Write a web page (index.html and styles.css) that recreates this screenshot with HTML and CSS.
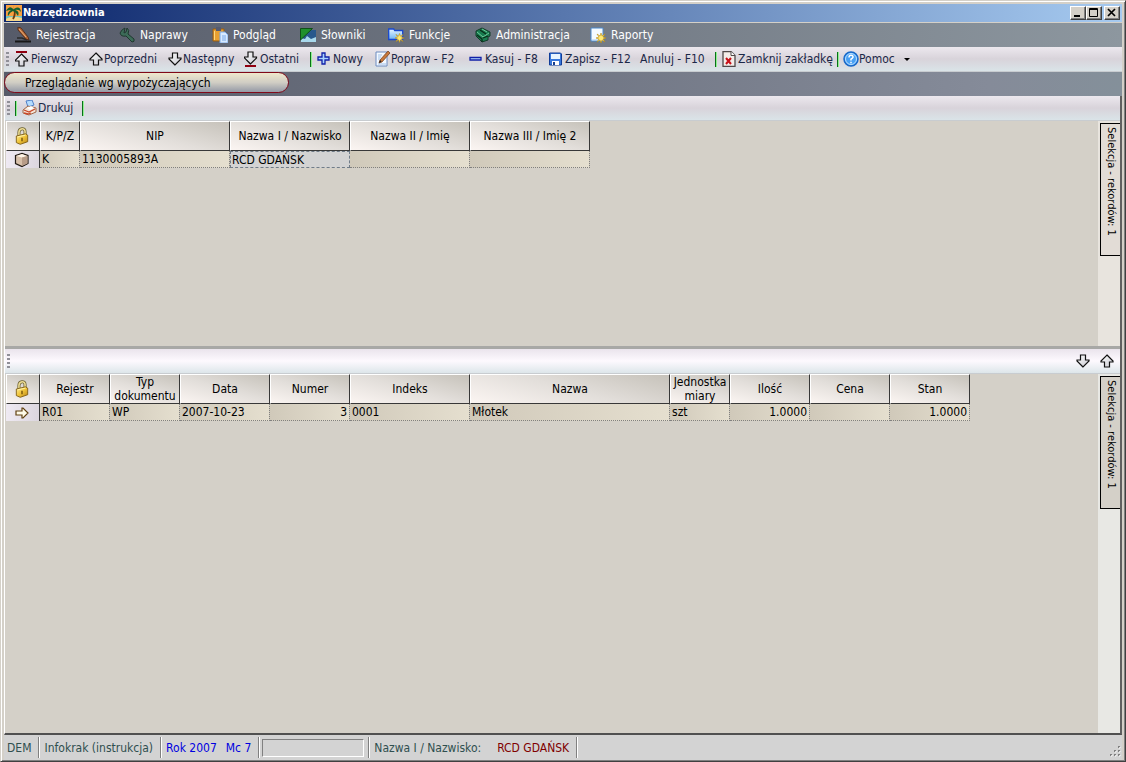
FILE: index.html
```html
<!DOCTYPE html>
<html lang="pl">
<head>
<meta charset="utf-8">
<title>Narzędziownia</title>
<link rel="stylesheet" href="styles.css">
</head>
<body>
<svg class="defs" aria-hidden="true">
  <defs>
    <linearGradient id="gold" x2="1" y2="1"><stop stop-color="#fff0a0"/><stop offset=".5" stop-color="#f0c438"/><stop offset="1" stop-color="#b88418"/></linearGradient>
    <linearGradient id="folder" x2="0" y2="1"><stop stop-color="#e8f6ff"/><stop offset="1" stop-color="#6db4f4"/></linearGradient>
    <linearGradient id="metal" x2="1" y2="1"><stop stop-color="#fff"/><stop offset="1" stop-color="#c8c8d0"/></linearGradient>
    <symbol id="up" viewBox="0 0 16 16"><path d="M8 2 14 8v1h-3.500v5h-5V9H2V8z" fill="url(#metal)" stroke="#111" stroke-width="1.2"/></symbol>
    <symbol id="down" viewBox="0 0 16 16"><path d="M8 14 2 8V7h3.500V2h5v5H14v1z" fill="url(#metal)" stroke="#111" stroke-width="1.2"/></symbol>
    <symbol id="star" viewBox="0 0 10 10"><path d="M5 0 6 3 9 1 7 4 10 5 7 6 9 9 6 7 5 10 4 7 1 9 3 6 0 5 3 4 1 1 4 3z" fill="#ffe870" stroke="#b88a10" stroke-width=".6"/></symbol>
    <symbol id="lock" viewBox="0 0 16 20"><path d="M4.500 10V6c0-5 7-6 7-1v4" fill="none" stroke="#6d6230" stroke-width="3.500"/><path d="M4.500 10V6c0-5 7-6 7-1v4" fill="none" stroke="#ecdc94" stroke-width="1.800"/><path d="M1.500 10 12 7.500 14.500 9v7.500L6 19.500l-4.500-2z" fill="url(#gold)" stroke="#7c5a10"/><path d="M3 11l9-2" stroke="#fff4b0"/><path d="M8 12v4" stroke="#6b4a08" stroke-width="1.500"/></symbol>
  </defs>
</svg>
<div class="window">
  <header class="titlebar">
    <svg class="icon" viewBox="0 0 16 16"><path d="M0 0h16v16H0z" fill="#f7a040"/><path d="M0 11h16v3H0z" fill="#6fc4c0"/><path d="M0 14q5-4 16-1v3H0z" fill="#f4d58a"/><path d="M8 4q2 5-1 10" fill="none" stroke="#6b3a10" stroke-width="1.800"/><path d="M8 5Q4-1 0 6q3-1 5-1-4 2-3 6 2-4 5-5 3 1 5 5 2-5-3-6 4-1 6 2-1-7-7-3L7 0z" fill="#146030"/></svg>
    <h1>Narzędziownia</h1>
    <div class="caption">
      <button aria-label="Minimalizuj"><svg viewBox="0 0 10 10"><path d="M1 8h6" stroke="#000" stroke-width="2"/></svg></button>
      <button aria-label="Maksymalizuj"><svg viewBox="0 0 10 10"><path d="M.5.5h8v8h-8zM.5 1.500h8" fill="none" stroke="#000"/></svg></button>
      <button class="close" aria-label="Zamknij"><svg viewBox="0 0 10 10"><path d="m1 1 7 7M8 1 1 8" stroke="#000" stroke-width="1.700"/></svg></button>
    </div>
  </header>

  <nav class="menu">
    <button><svg class="icon" viewBox="0 0 16 16"><path d="M0 14.500h16" stroke="#181818" stroke-width="2"/><path d="M2 11h5l5 2" stroke="#2a2a2a" stroke-width="1.500" fill="none"/><path d="M3 0 6 1l7 9 1 3-3-1L3 3z" fill="#b86a38" stroke="#4c2410" stroke-width=".8"/><path d="m4 2 7 8" stroke="#eab078"/></svg><span>Rejestracja</span></button>
    <button><svg class="icon" viewBox="0 0 16 16"><path d="M6 1Q3 2 1 6q1 4 6 3l6 6q3 0 2-3L9 7q2-4-1-6L7 5 5 6z" fill="#3c6b58" stroke="#20382f"/></svg><span>Naprawy</span></button>
    <button><svg class="icon" viewBox="0 0 16 16"><path d="M1 2h11v12H1z" fill="#e8a030" stroke="#995c10"/><path d="M2.500 4v9" stroke="#ffd880"/><path d="M4 0h5v4H4z" fill="#555b70"/><path d="M8 5h5l3 3v8H8z" fill="#d7eaff" stroke="#7aa8e4"/><path d="M10 9h4M10 11h4M10 13h4" stroke="#78a8e8"/></svg><span>Podgląd</span></button>
    <button><svg class="icon" viewBox="0 0 16 16"><path d="M1 3h15v12H1z" fill="#28588c"/><path d="M1 15v-4l4 1 2-3 4 3 5-2v5z" fill="#a8d8ec"/><path d="M.5 1.500h12L.5 13z" fill="#20902c" stroke="#105018"/></svg><span>Słowniki</span></button>
    <button><svg class="icon" viewBox="0 0 16 16"><path d="M.7 2h5l1 1.500h8v9h-14z" fill="url(#folder)" stroke="#1848d0" stroke-width="1.300"/><use href="#star" x="7" y="6" width="9" height="10"/></svg><span>Funkcje</span></button>
    <button><svg class="icon" viewBox="0 0 16 16"><path d="m1 4 6-3 8 4v4l-2 1v3l-6 2-6-6z" fill="#187c50" stroke="#123c28"/><path d="m2 5 6 5 6-4M7 2l5 3" fill="none" stroke="#70c898"/><path d="m2 8 5 4v3M5 3l6 4M8 11l5-2" stroke="#0a2c18" stroke-width="1.300" fill="none"/></svg><span>Administracja</span></button>
    <button><svg class="icon" viewBox="0 0 16 16"><path d="M1 1h12v13H1z" fill="#f4faff" stroke="#4a88cc"/><path d="M2 13h11" stroke="#a8ccf0"/><use href="#star" x="6" y="6" width="10" height="10"/></svg><span>Raporty</span></button>
  </nav>

  <div class="bar tools">
    <i class="grip"></i>
    <button><svg class="icon" viewBox="0 0 16 16"><path d="M1 1h11" stroke="#900010" stroke-width="2"/><path d="M6.500 3 12.500 9v1H9v5H4v-5H.5V9z" fill="url(#metal)" stroke="#111" stroke-width="1.200"/></svg><span>Pierwszy</span></button>
    <button><svg class="icon"><use href="#up"/></svg><span>Poprzedni</span></button>
    <button><svg class="icon"><use href="#down"/></svg><span>Następny</span></button>
    <button><svg class="icon" viewBox="0 0 16 16"><path d="M1 15h11" stroke="#900010" stroke-width="2"/><path d="M6.500 13 .5 7V6H4V1h5v5h3.500v1z" fill="url(#metal)" stroke="#111" stroke-width="1.200"/></svg><span>Ostatni</span></button>
    <i class="sep"></i>
    <button><svg class="icon" viewBox="0 0 16 16"><path d="M5 2h3v4h4v3H8v4H5V9H1V6h4z" fill="#a8d4ff" stroke="#1020a8" stroke-width="1.300"/></svg><span>Nowy</span></button>
    <button><svg class="icon" viewBox="0 0 16 16"><path d="M1 1h11v14H1z" fill="#f4f9ff" stroke="#6c8cc0"/><path d="M3 4h4M3 6h3M3 8h2M3 13h8" stroke="#9fc0e8"/><path d="m13 0 2 2-8 9-3 1 1-3z" fill="#c8783c" stroke="#6c3818" stroke-width=".7"/><path d="m4 12 1-3 1.500 1.500z" fill="#222"/></svg><span>Popraw - F2</span></button>
    <button><svg class="icon" viewBox="0 0 16 16"><path d="M1 6.500h11v2.500H1z" fill="#b8dcff" stroke="#1020a8" stroke-width="1.300"/></svg><span>Kasuj - F8</span></button>
    <button><svg class="icon" viewBox="0 0 16 16"><path d="M.5 2h11l1 1v11H.5z" fill="#3878dc" stroke="#103c98"/><path d="M2 3h9v5H2z" fill="#e8f4ff"/><path d="M3 10h7v4H3z" fill="#fff"/><path d="M4 11h2v3H4z" fill="#184090"/></svg><span>Zapisz - F12</span></button>
    <button><span>Anuluj - F10</span></button>
    <i class="sep"></i>
    <button><svg class="icon" viewBox="0 0 16 16"><path d="M1 .5h8l4 4v11H1z" fill="#f4ece8" stroke="#504848" stroke-width="1.300"/><path d="M9 .5v4h4" fill="#fff" stroke="#504848"/><path d="m4 7 5 6M9 7l-5 6" stroke="#c81018" stroke-width="2"/></svg><span>Zamknij zakładkę</span></button>
    <i class="sep"></i>
    <button><svg class="icon" viewBox="0 0 16 16"><circle cx="8" cy="8" r="7" fill="#48a0f4" stroke="#1868c8" stroke-width="1.500"/><circle cx="8" cy="8" r="5.500" fill="none" stroke="#b8e0ff"/><path d="M6 6.500q0-2.200 2-2.200 2.200 0 2 2Q9.500 7.500 8 8.200v1.300M8 10.800v1.500" fill="none" stroke="#fff" stroke-width="1.500"/></svg><span>Pomoc</span><i class="caret"></i></button>
  </div>

  <div class="tabs"><button class="tab">Przeglądanie wg wypożyczających</button></div>

  <main class="work">
    <div class="bar print">
      <i class="grip"></i><i class="sep"></i>
      <button><svg class="icon" viewBox="0 0 16 16"><path d="m4 1 6-1 2 5-6 2z" fill="#b4dcff" stroke="#5080c8"/><path d="m1 10 5-4 8 2v4l-7 3-6-2z" fill="#f4e4d8" stroke="#a06848"/><path d="m2 10 5 2 6-3M2 13l4 1 3-1" fill="none" stroke="#c84828" stroke-width="1.300"/><path d="m5 8 4-2 3 2-4 2z" fill="#fff"/></svg><span>Drukuj</span></button>
      <i class="sep"></i>
    </div>

    <section class="pane top">
      <div class="gridarea">
        <table>
          <colgroup><col class="w34"><col class="w40"><col class="w150"><col class="w120"><col class="w120"><col class="w120"></colgroup>
          <thead><tr><th aria-label="Blokada"><svg class="lock"><use href="#lock"/></svg></th><th>K/P/Z</th><th>NIP</th><th>Nazwa I / Nazwisko</th><th>Nazwa II / Imię</th><th>Nazwa III / Imię 2</th></tr></thead>
          <tbody><tr><td class="mark"><svg class="icon" viewBox="0 0 16 16"><path d="m1.500 3.500 6.500-2 6 2v8l-6 3-6.500-3z" fill="#d8c0aa" stroke="#221a14" stroke-width="1.200"/><path d="m2.500 4 5.500-2 5 2-5 1.500z" fill="#fff4e8"/><path d="M8 5.500V14l5.500-2.500V4z" fill="#b89c88"/></svg></td><td>K</td><td>1130005893A</td><td class="focus">RCD GDAŃSK</td><td></td><td></td></tr></tbody>
        </table>
      </div>
      <aside class="side"><button class="sidetab">Selekcja - rekordów: 1</button></aside>
    </section>

    <div class="bar splitter">
      <i class="grip"></i>
      <button aria-label="W dół"><svg class="icon"><use href="#down"/></svg></button>
      <button aria-label="W górę"><svg class="icon"><use href="#up"/></svg></button>
    </div>

    <section class="pane bottom">
      <div class="gridarea">
        <table>
          <colgroup><col class="w34"><col class="w70"><col class="w70"><col class="w90"><col class="w80"><col class="w120"><col class="w200"><col class="w60"><col class="w80"><col class="w80"><col class="w80"></colgroup>
          <thead><tr><th aria-label="Blokada"><svg class="lock"><use href="#lock"/></svg></th><th>Rejestr</th><th>Typ dokumentu</th><th>Data</th><th>Numer</th><th>Indeks</th><th>Nazwa</th><th>Jednostka miary</th><th>Ilość</th><th>Cena</th><th>Stan</th></tr></thead>
          <tbody><tr><td class="mark"><svg class="icon" viewBox="0 0 16 16"><path d="M2 6h6V3h1l5 5-5 5H8v-3H2z" fill="#fffbe8" stroke="#604010" stroke-width="1.200"/></svg></td><td>R01</td><td>WP</td><td>2007-10-23</td><td class="num">3</td><td>0001</td><td>Młotek</td><td>szt</td><td class="num">1.0000</td><td></td><td class="num">1.0000</td></tr></tbody>
        </table>
      </div>
      <aside class="side"><button class="sidetab">Selekcja - rekordów: 1</button></aside>
    </section>
  </main>

  <footer class="status">
    <span class="cell">DEM</span>
    <span class="cell">Infokrak (instrukcja)</span>
    <span class="cell period"><span>Rok 2007</span><span>Mc 7</span></span>
    <span class="cell progress"><i></i></span>
    <span class="cell field"><span>Nazwa I / Nazwisko:</span><b>RCD GDAŃSK</b></span>
    <svg class="resize" viewBox="0 0 12 12"><path d="M9 1h2v2H9zM5 5h2v2H5zM9 5h2v2H9zM1 9h2v2H1zM5 9h2v2H5zM9 9h2v2H9z" fill="#808080"/><path d="M11 2v1h-1M7 6v1H6M11 6v1h-1M3 10v1H2M7 10v1H6M11 10v1h-1" fill="none" stroke="#fff"/></svg>
  </footer>
</div>
</body>
</html>
```
FILE: styles.css
```css
* { box-sizing: border-box; }
body {
  margin: 0;
  font: 12px/14px "DejaVu Sans Condensed", "DejaVu Sans", Tahoma, sans-serif;
  color: #000;
}
button {
  margin: 0;
  padding: 0;
  border: 0;
  background: none;
  font: inherit;
  color: inherit;
  white-space: nowrap;
}
.defs { position: absolute; width: 0; height: 0; }
.icon { width: 16px; height: 16px; flex: none; }

.window {
  display: flex;
  flex-direction: column;
  min-height: 100vh;
  padding: 3px 3px 1px;
  background: #d4d0c8;
  border: 1px solid #d4d0c8;
  border-right-color: #404040;
  border-bottom-color: #404040;
  box-shadow: inset 1px 1px #fff, inset -1px -1px #808080;
}

.titlebar {
  display: flex;
  align-items: center;
  height: 18px;
  padding: 0 2px;
  background: linear-gradient(90deg, #0a246a, #a6caf0);
  color: #fff;
}
.titlebar h1 { flex: 1; margin: 0 0 0 1px; font-size: 11px; font-weight: bold; }
.caption { display: flex; }
.caption button {
  display: grid;
  place-items: center;
  width: 16px;
  height: 14px;
  background: #d4d0c8;
  border: 1px solid;
  border-color: #fff #404040 #404040 #fff;
  box-shadow: inset -1px -1px #808080;
}
.caption svg { width: 10px; height: 10px; }
.caption .close { margin-left: 2px; }

.menu {
  display: grid;
  grid-template-columns: 104px 93px 88px 88px 87px 115px auto;
  height: 25px;
  padding: 0 0 0 11px;
  border-top: 1px solid #d4d0c8;
  background: linear-gradient(90deg, #565b69, #8d979f);
  color: #fff;
}
.menu button, .bar button { display: flex; align-items: center; }
.menu button { gap: 5px; }

.bar {
  height: 25px;
  background: linear-gradient(#ece8ee, #d8d3da 50%, #dae4e8);
  border-bottom: 1px solid #c8ccd0;
  color: #1c2848;
}
.tools {
  display: grid;
  grid-template-columns: 11px 73px 79px 77px 66px 7px 58px 94px 80px 91px 75px 7px 115px 6px auto;
}
.grip {
  width: 3px;
  height: 15px;
  margin: 5px 0 0 2px;
  background: repeating-linear-gradient(#909098 0 2px, transparent 2px 4px);
}
.sep { width: 2px; height: 15px; margin-top: 5px; background: linear-gradient(90deg, #087018 50%, #90f090 50%); }
.caret { margin-left: 9px; border: 3px solid transparent; border-top-color: #000; border-bottom: 0; }

.tabs { display: flex; height: 24px; background: linear-gradient(90deg, #565b69, #858b99 88%, #84909a); }
.tab {
  width: 285px;
  height: 21px;
  padding: 0 20px;
  border: 1px solid #800818;
  border-radius: 11px;
  background: linear-gradient(#efe8cc, #d0cdc4 50%, #9499a6);
  text-align: left;
}

.work {
  flex: 1;
  display: flex;
  flex-direction: column;
  border-left: 1px solid #fff;
  border-right: 2px solid #606060;
  border-bottom: 2px solid #505050;
  background: #d4d0c8;
}
.print { display: flex; gap: 5px; }
.print .sep:last-child { margin-left: 4px; }
.pane { display: flex; min-height: 0; }
.top { height: 225px; }
.bottom { flex: 1; }
.gridarea { flex: 1; padding-left: 1px; }
.side { width: 22px; padding: 2px 0 0 2px; background: #e8e4de; }
.bottom .side { background: #e8e8e4; }
.sidetab {
  width: 20px;
  height: 133px;
  padding: 3px 0;
  writing-mode: vertical-rl;
  text-align: left;
  font-size: 11px;
  border: 1px solid #000;
  border-right: 0;
  background: #e2dcd6;
}
.bottom .sidetab { background: #d4d0c8; }

.splitter {
  display: flex;
  align-items: center;
  gap: 8px;
  height: 28px;
  padding-right: 5px;
  border-top: 3px solid #a8a8a6;
  background: linear-gradient(#eae4ec, #fdf9fe 50%, #dde6ea);
}
.splitter .grip { margin: 0 auto 0 2px; }

table { table-layout: fixed; width: 0; border-spacing: 0; }
.w34 { width: 34px; }
.w40 { width: 40px; }
.w60 { width: 60px; }
.w70 { width: 70px; }
.w80 { width: 80px; }
.w90 { width: 90px; }
.w120 { width: 120px; }
.w150 { width: 150px; }
.w200 { width: 200px; }
th {
  height: 30px;
  padding: 0;
  border: 1px solid;
  border-color: #fff #383838 #383838 #fff;
  background: linear-gradient(15deg, #fbf5f2, #e2deda 50%, #c6c2ba);
  font-weight: normal;
  line-height: 14px;
}
td {
  height: 17px;
  padding: 0 2px;
  border-right: 1px dotted #808080;
  border-bottom: 1px dotted #808080;
  background: linear-gradient(90deg, #d0c9ba, #e5dfcf);
  white-space: nowrap;
}
.num { text-align: right; }
.mark { padding: 0 2px 0 1px; border-right: 1px solid #383838; border-bottom: 0; background: linear-gradient(90deg, #efeaf3, #dcd6de); }
.mark svg { display: block; margin: 0 auto; }
.lock { display: block; width: 14px; height: 18px; margin: 0 8px; }
.focus { border: 1px dashed #707c88; background: #d3d3d3; padding-left: 1px; }

.status { display: flex; height: 25px; padding-top: 1px; background: #d3d3d3; color: #2f4f4f; }
.cell {
  display: flex;
  align-items: center;
  height: 21px;
  margin-top: 1px;
  padding: 0 7px 0 3px;
  border-right: 1px solid #808080;
  box-shadow: 1px 0 #fff;
}
.cell + .cell { margin-left: 1px; padding-left: 4px; }
.period { gap: 9px; color: #0000e0; }
.status .progress { padding: 0 4px 0 2px; }
.progress i { width: 102px; height: 18px; border: 1px solid; border-color: #808080 #fff #fff #808080; }
.field { gap: 16px; }
.field b { font-weight: normal; color: #800000; }
.resize { width: 12px; height: 12px; margin: auto 1px 3px auto; }
```
